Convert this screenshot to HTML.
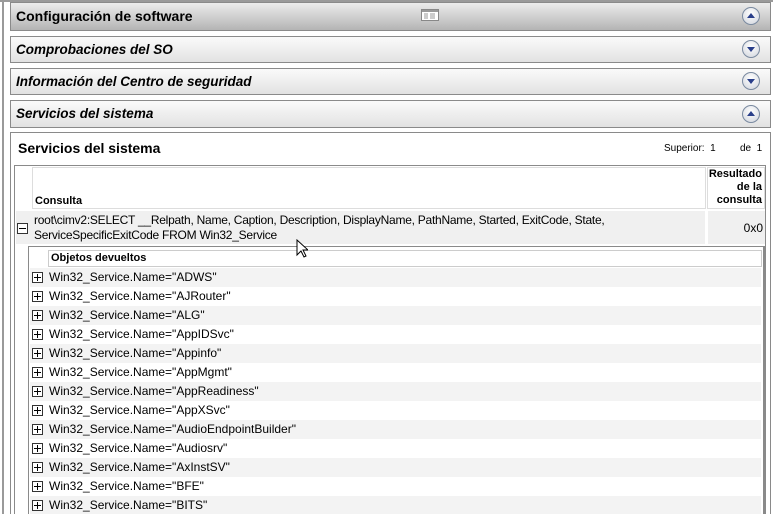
<!DOCTYPE html>
<html style="width:773px;height:514px;overflow:hidden"><head><meta charset="utf-8"><style>
*{box-sizing:border-box;margin:0;padding:0}
body{width:773px;height:514px;overflow:hidden;background:#fff;font-family:"Liberation Sans",sans-serif;font-size:12px;color:#000;position:relative}
.a{position:absolute}
.hdr{position:absolute;left:10px;width:761px;border:1px solid #8a8a8a;background:linear-gradient(#fafafa,#e2e2e2);}
.hdr span{position:absolute;left:5px;font-weight:bold;font-style:italic;font-size:13.5px}
.btn{position:absolute;right:10px;width:18px;height:18px;border-radius:50%;border:1px solid #7a8aa0;background:radial-gradient(circle at 50% 35%,#fff,#d0d4dc);}
.btn i{position:absolute;left:4px;width:0;height:0;border-left:4px solid transparent;border-right:4px solid transparent}
.up i{top:5px;border-bottom:5px solid #2a3f8a}
.dn i{top:6px;border-top:5px solid #2a3f8a}
.row{position:absolute;left:30px;width:731px;height:19px;font-size:12px;line-height:19px}
.row.g{background:#f3f3f3}
.pl{position:absolute;left:2px;top:4px;width:11px;height:11px;border:1px solid #333;background:#fff}
.pl:before{content:"";position:absolute;left:1px;top:4px;width:7px;height:1px;background:#000}
.pl.p:after{content:"";position:absolute;left:4px;top:1px;width:1px;height:7px;background:#000}
.row span{position:absolute;left:19px}
</style></head><body>
<div class="a" style="left:2px;top:0;width:2px;height:514px;background:#9a9a9a"></div>
<div class="a" style="left:0;top:0;width:773px;height:2px;background:#9a9a9a"></div>
<div class="hdr" style="top:2px;height:29px;background:linear-gradient(#ececec,#b4b4b4)"><span style="top:5px;font-style:normal;font-size:14px">Configuración de software</span>
<svg class="a" style="left:410px;top:6px" width="18" height="12"><rect x="0.5" y="0.5" width="17" height="11" fill="#fff" stroke="#888"/><rect x="1" y="1" width="16" height="2" fill="#999"/><path d="M3 5h4M9 5h5M3 7h4M9 7h5M3 9h4M9 9h5" stroke="#999"/></svg>
<div class="btn up" style="top:4px"><i></i></div></div>
<div class="hdr" style="top:36px;height:27px"><span style="top:5px">Comprobaciones del SO</span><div class="btn dn" style="top:3px"><i></i></div></div>
<div class="hdr" style="top:68px;height:27px"><span style="top:5px">Información del Centro de seguridad</span><div class="btn dn" style="top:3px"><i></i></div></div>
<div class="hdr" style="top:100px;height:28px"><span style="top:5px">Servicios del sistema</span><div class="btn up" style="top:4px"><i></i></div></div>
<div class="a" style="left:10px;top:132px;width:761px;height:390px;border:1px solid #8a8a8a"></div>
<div class="a" style="left:18px;top:140px;font-weight:bold;font-size:14px">Servicios del sistema</div>
<div class="a" style="left:664px;top:143px;font-size:10px">Superior:&nbsp; 1</div>
<div class="a" style="left:740px;top:143px;font-size:10px">de&nbsp; 1</div>
<div class="a" style="left:14px;top:165px;width:752px;height:360px;border:1px solid #8a8a8a"></div>
<div class="a" style="left:32px;top:167px;width:674px;height:42px;border:1px solid #ddd"></div>
<div class="a" style="left:35px;top:195px;font-weight:bold;font-size:11px">Consulta</div>
<div class="a" style="left:707px;top:167px;width:58px;height:42px;border:1px solid #ddd;font-weight:bold;font-size:11px;text-align:right;line-height:13px;padding-right:2px">Resultado<br>de la<br>consulta</div>
<div class="a" style="left:16px;top:211px;width:689px;height:33px;background:#f0f0f0"></div>
<div class="a" style="left:708px;top:211px;width:57px;height:33px;background:#f0f0f0;text-align:right;padding-right:2px;padding-top:10px">0x0</div>
<div class="pl a" style="left:17px;top:223px"></div>
<div class="a" style="left:34px;top:213px;line-height:15px;font-size:12px;letter-spacing:-0.25px;white-space:nowrap">root\cimv2:SELECT __Relpath, Name, Caption, Description, DisplayName, PathName, Started, ExitCode, State,<br>ServiceSpecificExitCode FROM Win32_Service</div>
<div class="a" style="left:28px;top:246px;width:737px;height:280px;border:1px solid #8a8a8a;border-right:2px solid #8a8a8a"></div>
<div class="a" style="left:48px;top:250px;width:714px;height:17px;border:1px solid #ccc;font-weight:bold;font-size:11px;line-height:15px;padding-left:2px">Objetos devueltos</div>
<div class="row g" style="top:268px"><div class="pl p"></div><span>Win32_Service.Name="ADWS"</span></div>
<div class="row" style="top:287px"><div class="pl p"></div><span>Win32_Service.Name="AJRouter"</span></div>
<div class="row g" style="top:306px"><div class="pl p"></div><span>Win32_Service.Name="ALG"</span></div>
<div class="row" style="top:325px"><div class="pl p"></div><span>Win32_Service.Name="AppIDSvc"</span></div>
<div class="row g" style="top:344px"><div class="pl p"></div><span>Win32_Service.Name="Appinfo"</span></div>
<div class="row" style="top:363px"><div class="pl p"></div><span>Win32_Service.Name="AppMgmt"</span></div>
<div class="row g" style="top:382px"><div class="pl p"></div><span>Win32_Service.Name="AppReadiness"</span></div>
<div class="row" style="top:401px"><div class="pl p"></div><span>Win32_Service.Name="AppXSvc"</span></div>
<div class="row g" style="top:420px"><div class="pl p"></div><span>Win32_Service.Name="AudioEndpointBuilder"</span></div>
<div class="row" style="top:439px"><div class="pl p"></div><span>Win32_Service.Name="Audiosrv"</span></div>
<div class="row g" style="top:458px"><div class="pl p"></div><span>Win32_Service.Name="AxInstSV"</span></div>
<div class="row" style="top:477px"><div class="pl p"></div><span>Win32_Service.Name="BFE"</span></div>
<div class="row g" style="top:496px"><div class="pl p"></div><span>Win32_Service.Name="BITS"</span></div>
<svg class="a" style="left:296px;top:239px" width="12" height="20"><path d="M1 1v15l4-4 3 6 2-1-3-6h5z" fill="#fff" stroke="#000"/></svg>
</body></html>
